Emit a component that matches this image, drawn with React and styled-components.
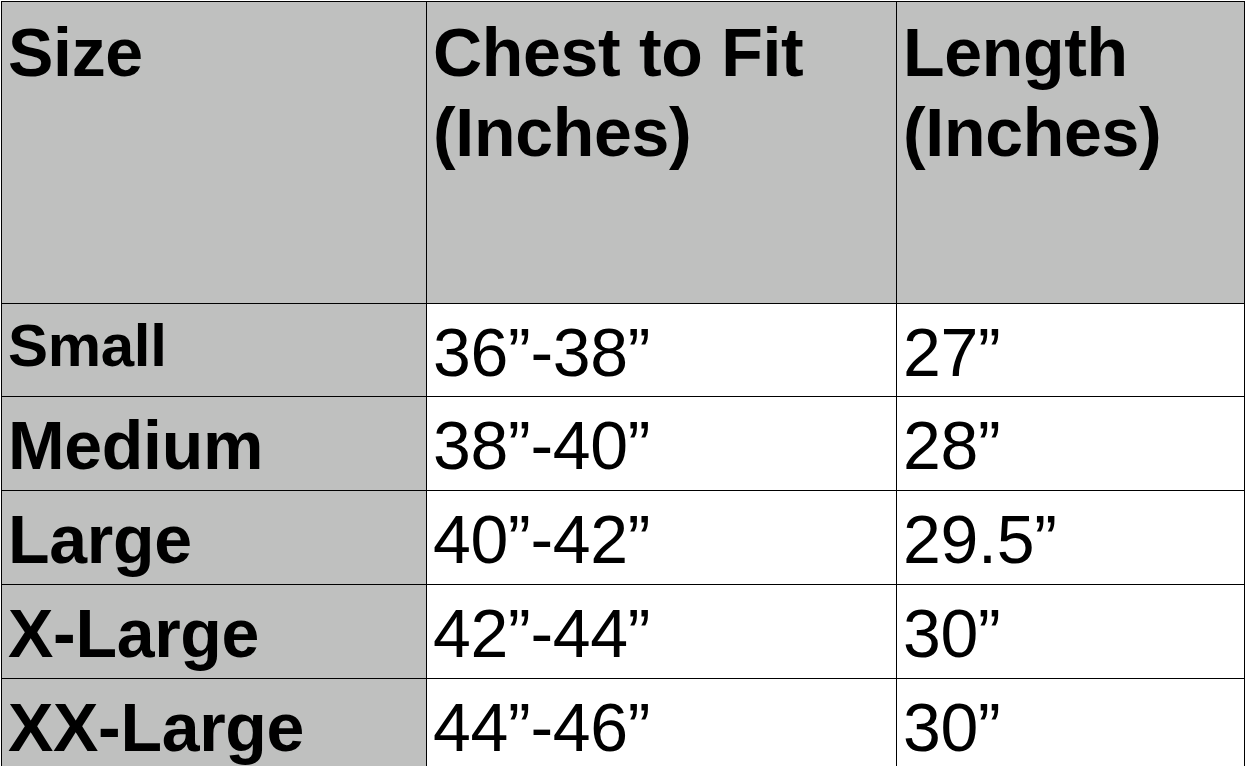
import React from 'react';
import styled, { createGlobalStyle } from 'styled-components';

const GlobalStyle = createGlobalStyle`
  html, body {
    margin: 0;
    padding: 0;
    background: #fff;
    overflow: hidden;
  }
  body {
    font-family: "Liberation Sans", Arial, sans-serif;
    color: #000;
  }
`;

const rows = [
  { size: 'Small', chest: '36”-38”', length: '27”', small: true },
  { size: 'Medium', chest: '38”-40”', length: '28”' },
  { size: 'Large', chest: '40”-42”', length: '29.5”' },
  { size: 'X-Large', chest: '42”-44”', length: '30”' },
  { size: 'XX-Large', chest: '44”-46”', length: '30”' },
];

const Page = styled.div`
  padding: 1px 0 0 1px;
  height: 766px;
  box-sizing: border-box;
`;

const Grid = styled.div`
  display: grid;
  grid-template-columns: 425px 470px 348px;
  grid-template-rows: 302px 93px repeat(4, 94px);
  border-top: 1px solid #000;
  border-left: 1px solid #000;
  width: max-content;
`;

const Cell = styled.div`
  box-sizing: border-box;
  border-right: 1px solid #000;
  border-bottom: 1px solid #000;
  background: ${p => (p.$shaded ? '#bfc0bf' : '#fff')};
  padding: ${p => (p.$head ? '10px' : p.$small ? '2px' : '8px')} 0 0 6px;
  font-size: ${p => (p.$small ? '60px' : '68px')};
  font-weight: ${p => (p.$bold ? 700 : 400)};
  line-height: 80px;
  letter-spacing: -0.3px;
  white-space: nowrap;
  overflow: hidden;
`;

export default function App() {
  return (
    <Page>
      <GlobalStyle />
      <Grid>
        <Cell $shaded $head $bold>Size</Cell>
        <Cell $shaded $head $bold>Chest to Fit<br />(Inches)</Cell>
        <Cell $shaded $head $bold>Length<br />(Inches)</Cell>
        {rows.map(r => (
          <React.Fragment key={r.size}>
            <Cell $shaded $bold $small={r.small}>{r.size}</Cell>
            <Cell>{r.chest}</Cell>
            <Cell>{r.length}</Cell>
          </React.Fragment>
        ))}
      </Grid>
    </Page>
  );
}
